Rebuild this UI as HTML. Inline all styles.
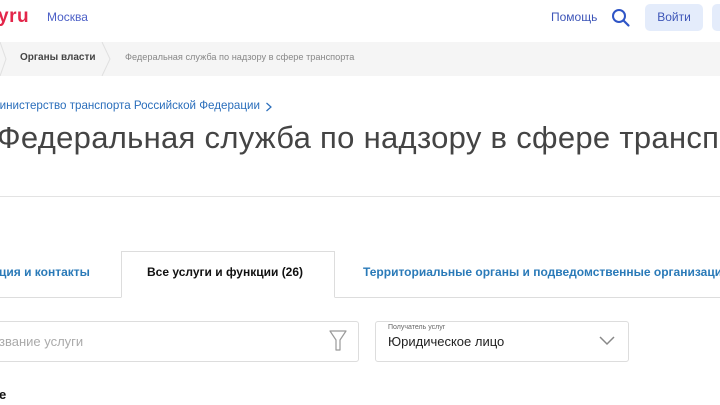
<!DOCTYPE html>
<html><head><meta charset="utf-8"><style>
*{margin:0;padding:0;box-sizing:border-box}
body{width:720px;height:405px;overflow:hidden;background:#fff;font-family:"Liberation Sans","Noto Sans CJK SC",sans-serif;position:relative}
.a{position:absolute;white-space:nowrap}
</style></head><body>
<div class="a" style="left:-2px;top:6px;font-size:19px;font-weight:bold;color:#e3264a;letter-spacing:0.5px">уru</div>
<div class="a" style="left:47px;top:10px;font-size:12px;color:#4b5fc7">Москва</div>
<div class="a" style="left:551px;top:10px;font-size:12px;color:#3e56b8">Помощь</div>
<svg class="a" style="left:611px;top:8px" width="20" height="20" viewBox="0 0 20 20"><circle cx="8" cy="8" r="6" fill="none" stroke="#2f55c6" stroke-width="2"/><line x1="12.5" y1="12.5" x2="17.5" y2="17.5" stroke="#2f55c6" stroke-width="2.2" stroke-linecap="round"/></svg>
<div class="a" style="left:645px;top:4px;width:58px;height:27px;background:#e4ecfb;border-radius:5px;font-size:12px;color:#3e56b8;text-align:center;line-height:27px">Войти</div>
<div class="a" style="left:712px;top:4px;width:20px;height:27px;background:#e4ecfb;border-radius:5px"></div>
<div class="a" style="left:0;top:42px;width:720px;height:34px;background:#f5f5f5"></div>
<svg class="a" style="left:0;top:42px" width="720" height="34"><polyline points="0,0 6,17 0,34" fill="none" stroke="#e0e0e0"/><polyline points="102,0 110,17 102,34" fill="none" stroke="#e0e0e0"/></svg>
<div class="a" style="left:20px;top:52px;font-size:10px;font-weight:bold;color:#444">Органы власти</div>
<div class="a" style="left:125px;top:52px;font-size:9.2px;color:#888">Федеральная служба по надзору в сфере транспорта</div>
<div class="a" style="left:-10px;top:99px;font-size:11.6px;color:#2a6ebb">Министерство транспорта Российской Федерации</div>
<svg class="a" style="left:265px;top:102px" width="8" height="10"><polyline points="1.5,1 6,5 1.5,9" fill="none" stroke="#2a6ebb" stroke-width="1.2"/></svg>
<div class="a" style="left:-3px;top:120px;font-size:31px;font-weight:normal;color:#444;letter-spacing:0.3px">Федеральная служба по надзору в сфере транспорта</div>
<div class="a" style="left:0;top:196px;width:720px;height:1px;background:#e3e3e3"></div>
<div class="a" style="left:0;top:297px;width:720px;height:1px;background:#ddd"></div>
<div class="a" style="left:121px;top:251px;width:214px;height:47px;border:1px solid #ddd;border-bottom:1px solid #fff;background:#fff"></div>
<div class="a" style="left:-1px;top:265px;font-size:12px;font-weight:bold;color:#2a7ab8">ция и контакты</div>
<div class="a" style="left:147px;top:265px;font-size:12px;font-weight:bold;color:#111">Все услуги и функции (26)</div>
<div class="a" style="left:363px;top:265px;font-size:12px;font-weight:bold;color:#2a7ab8">Территориальные органы и подведомственные организации</div>
<div class="a" style="left:-5px;top:321px;width:364px;height:41px;border:1px solid #ddd;border-radius:3px"></div>
<div class="a" style="left:-1px;top:334px;font-size:13px;color:#aaa">звание услуги</div>
<svg class="a" style="left:329px;top:330px" width="18" height="22" viewBox="0 0 18 22"><path d="M1,1 H17 L11,10 V20 H7 V10 Z" fill="none" stroke="#999" stroke-width="1.2" stroke-linejoin="round"/></svg>
<div class="a" style="left:375px;top:321px;width:254px;height:41px;border:1px solid #ddd;border-radius:3px"></div>
<div class="a" style="left:388px;top:324px;font-size:7px;color:#666">Получатель услуг</div>
<div class="a" style="left:388px;top:334px;font-size:13px;color:#222">Юридическое лицо</div>
<svg class="a" style="left:598px;top:335px" width="18" height="12"><polyline points="2,2 9,9 16,2" fill="none" stroke="#888" stroke-width="1.5"/></svg>
<div class="a" style="left:-1px;top:387px;font-size:13px;font-weight:bold;color:#111">е</div>
</body></html>
